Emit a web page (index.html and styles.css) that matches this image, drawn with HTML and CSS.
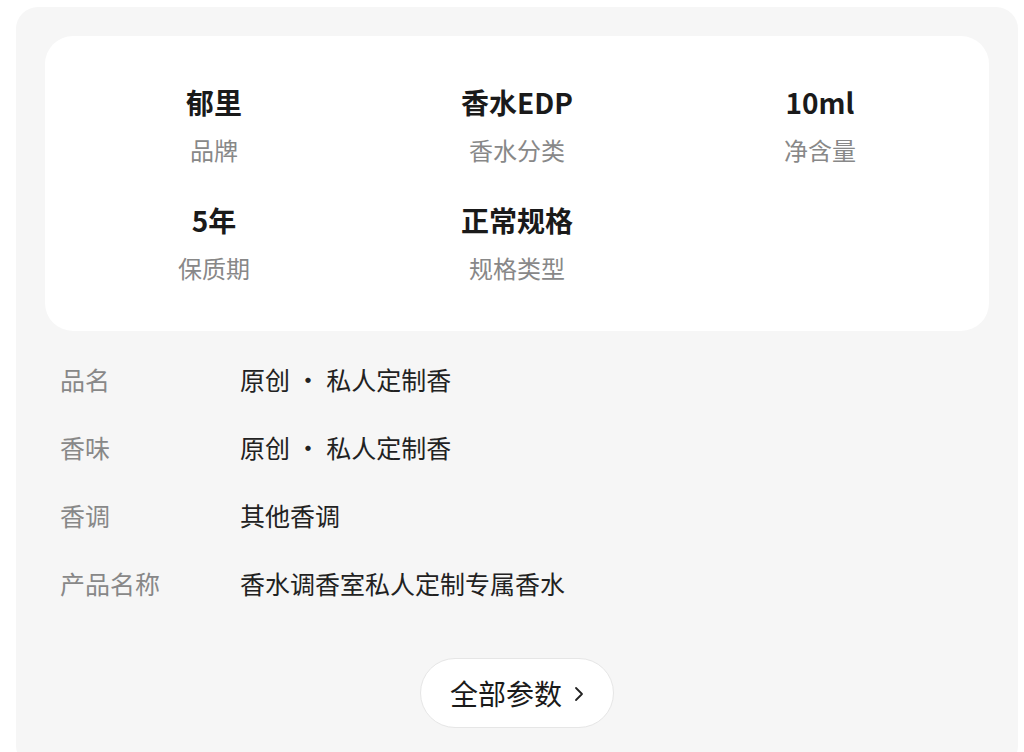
FILE: index.html
```html
<!DOCTYPE html>
<html lang="zh-CN">
<head>
  <meta charset="UTF-8" />
  <meta name="viewport" content="width=device-width, initial-scale=1.0"/>
  <title>商品参数</title>
  <link rel="stylesheet" href="styles.css">
</head>
<body>
  <div class="panel">
    <!-- 主要参数 -->
    <div class="specs">
      <div class="spec">
        <div class="spec-value">郁里</div>
        <div class="spec-label">品牌</div>
      </div>
      <div class="spec">
        <div class="spec-value">香水EDP</div>
        <div class="spec-label">香水分类</div>
      </div>
      <div class="spec">
        <div class="spec-value">10ml</div>
        <div class="spec-label">净含量</div>
      </div>
      <div class="spec">
        <div class="spec-value">5年</div>
        <div class="spec-label">保质期</div>
      </div>
      <div class="spec">
        <div class="spec-value">正常规格</div>
        <div class="spec-label">规格类型</div>
      </div>
    </div>

    <!-- 其他参数 -->
    <div class="rows">
      <div class="row">
        <span class="row-label">品名</span>
        <span class="row-value">原创 · 私人定制香</span>
      </div>
      <div class="row">
        <span class="row-label">香味</span>
        <span class="row-value">原创 · 私人定制香</span>
      </div>
      <div class="row">
        <span class="row-label">香调</span>
        <span class="row-value">其他香调</span>
      </div>
      <div class="row">
        <span class="row-label">产品名称</span>
        <span class="row-value">香水调香室私人定制专属香水</span>
      </div>
    </div>

    <div class="more">
      <button class="more-btn">
        全部参数
        <svg class="chevron" width="10" height="16" viewBox="0 0 10 16">
          <polyline points="2,2 8,8 2,14" fill="none" stroke="#222" stroke-width="1.8" stroke-linecap="round" stroke-linejoin="round"/>
        </svg>
      </button>
    </div>
  </div>
</body>
</html>
```

FILE: styles.css
```css
body {
  margin: 0;
  padding: 7px 6px 0 16px;
  background: #fff;
  font-family: "Noto Sans CJK SC", "Noto Sans", sans-serif;
  color: #222;
}
.panel {
  background: #f6f6f6;
  border-radius: 22px;
  padding: 29px 29px 40px;
}
.specs {
  background: #fff;
  border-radius: 28px;
  padding: 48px 0 45px;
  display: grid;
  grid-template-columns: repeat(3, 303px);
  justify-content: center;
  row-gap: 34px;
}
.spec {
  text-align: center;
}
.spec-value {
  font-size: 28px;
  font-weight: bold;
  line-height: 36px;
  color: #1a1a1a;
}
.spec-label {
  font-size: 24px;
  line-height: 36px;
  margin-top: 12px;
  color: #888;
}
.rows {
  margin-top: 14px;
  padding-left: 15px;
}
.row {
  display: flex;
  align-items: center;
  height: 68px;
  font-size: 25px;
}
.row-label {
  width: 180px;
  color: #888;
}
.row-value {
  color: #222;
}
.more {
  display: flex;
  justify-content: center;
  margin-top: 41px;
}
.more-btn {
  display: flex;
  align-items: center;
  gap: 12px;
  height: 70px;
  padding: 0 29px;
  background: #fff;
  border: 1px solid #e6e6e6;
  border-radius: 35px;
  font-family: inherit;
  font-size: 28px;
  color: #1a1a1a;
  cursor: pointer;
}
.chevron {
  margin-top: 2px;
}
```
